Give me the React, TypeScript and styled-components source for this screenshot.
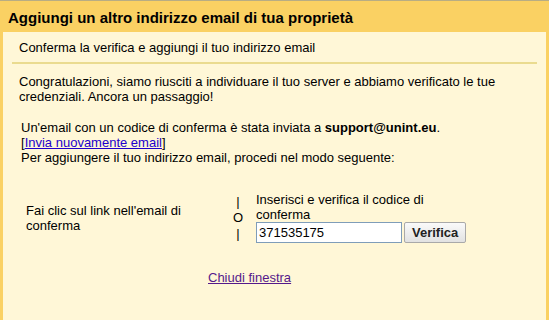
import styled, { createGlobalStyle } from 'styled-components';

const GlobalStyle = createGlobalStyle`
html, body {
    margin: 0;
    padding: 0;
    background: #fff7d7;
}
body {
    font-family: 'Liberation Sans', Arial, sans-serif;
    font-size: 13px;
    color: #000;
}
`;

export default function App () {
    return (
        <>
            <GlobalStyle />
            <Dialog>
                <Title>Aggiungi un altro indirizzo email di tua proprietà</Title>
                <Panel>
                    <SubHeader>Conferma la verifica e aggiungi il tuo indirizzo email</SubHeader>
                    <Body>
                        <Paragraph>
                            Congratulazioni, siamo riusciti a individuare il tuo server e abbiamo verificato le tue credenziali. Ancora un passaggio!
                        </Paragraph>
                        <Notice>
                            Un'email con un codice di conferma è stata inviata a <b>support@unint.eu</b>.
                            <br />
                            [<Link href="#">Invia nuovamente email</Link>]
                            <br />
                            Per aggiungere il tuo indirizzo email, procedi nel modo seguente:
                        </Notice>
                        <Options>
                            <Option>Fai clic sul link nell'email di conferma</Option>
                            <Divider>
                                <span>|</span>
                                <span>O</span>
                                <span>|</span>
                            </Divider>
                            <CodeOption>
                                Inserisci e verifica il codice di conferma
                                <CodeRow>
                                    <CodeInput defaultValue="371535175" />
                                    <VerifyButton>Verifica</VerifyButton>
                                </CodeRow>
                            </CodeOption>
                        </Options>
                        <Footer>
                            <CloseLink href="#">Chiudi finestra</CloseLink>
                        </Footer>
                    </Body>
                </Panel>
            </Dialog>
        </>
    );
}

const Dialog = styled.div`
width: 549px;
height: 320px;
display: flex;
flex-direction: column;
background: #fad163;
border-top: 1px solid #b8ad83;
box-sizing: border-box;
overflow: hidden;
`;

const Title = styled.h1`
margin: 0;
padding: 8px 8px 6px;
height: 17px;
font-size: 15px;
font-weight: bold;
line-height: 17px;
color: #000;
`;

const Panel = styled.div`
flex: 1;
margin: 0 3px;
background: #fff7d7;
`;

const SubHeader = styled.div`
margin: 0 9px;
padding: 8px 7px 7px;
line-height: 15px;
border-bottom: 2px solid #eadb8f;
`;

const Body = styled.div`
padding: 10px 16px 0;
line-height: 15px;
`;

const Paragraph = styled.p`
margin: 0;
`;

const Notice = styled.p`
margin: 16px 0 0 2px;
line-height: 15px;
`;

const Link = styled.a`
color: #2200cc;
text-decoration: underline;
`;

const Options = styled.div`
display: grid;
grid-template-columns: 200px 24px 218px;
align-items: center;
margin: 27px 0 0 7px;
`;

const Option = styled.div`
line-height: 15px;
padding-right: 20px;
`;

const CodeOption = styled.div`
padding-left: 6px;
line-height: 15px;
`;

const Divider = styled.div`
display: flex;
flex-direction: column;
align-items: center;
gap: 2px;
line-height: 14px;
font-size: 13px;
`;

const CodeRow = styled.div`
display: flex;
align-items: center;
gap: 2px;
`;

const CodeInput = styled.input`
box-sizing: border-box;
width: 146px;
height: 21px;
padding: 1px 2px;
border: 1px solid #7f9db9;
font-family: 'Liberation Sans', Arial, sans-serif;
font-size: 13px;
background: #fff;
outline: none;
`;

const VerifyButton = styled.button`
box-sizing: border-box;
height: 21px;
padding: 0 7px;
border: 1px solid #a9a9a9;
border-radius: 2px;
background: linear-gradient(#fafafa, #e2e2e2);
font-family: 'Liberation Sans', Arial, sans-serif;
font-size: 13px;
font-weight: bold;
color: #222;
`;

const Footer = styled.div`
margin-top: 27px;
padding-left: 189px;
`;

const CloseLink = styled.a`
color: #551a8b;
text-decoration: underline;
`;
